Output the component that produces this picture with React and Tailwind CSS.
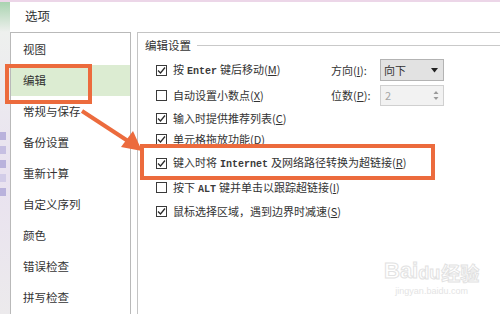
import React from "react";

const U = ({ children }) => <span className="underline underline-offset-1">{children}</span>;
const M = ({ children }) => (
  <span className="font-['Liberation_Mono'] text-[10px] font-bold text-[#3a3a3a] mx-[3px]">{children}</span>
);

function Box({ checked }) {
  return (
    <span className="w-[11px] h-[11px] border border-[#3a3a3a] bg-white flex items-center justify-center shrink-0 mr-[6px]">
      {checked && (
        <svg width="9" height="9" viewBox="0 0 9 9">
          <polyline points="1,4.5 3.5,7 8,1.5" fill="none" stroke="#2a2a2a" strokeWidth="1.3" />
        </svg>
      )}
    </span>
  );
}

function Row({ h, checked, children, extra }) {
  return (
    <div className={`flex items-center ${h}`}>
      <div className="flex items-center w-[175px] whitespace-nowrap">
        <Box checked={checked} />
        <span>{children}</span>
      </div>
      {extra}
    </div>
  );
}

const items = ["视图", "编辑", "常规与保存", "备份设置", "重新计算", "自定义序列", "颜色", "错误检查", "拼写检查"];

export default function App() {
  return (
    <div className="w-[500px] h-[314px] relative overflow-hidden bg-white text-[#333333] font-['Noto_Sans_CJK_SC',sans-serif]">
      <div className="h-[2px] bg-[#ecd6e8]" />
      <div className="flex h-[30px]">
        <div className="w-[10px] bg-gradient-to-b from-[#a9d3b0] to-[#eef0ee]" />
        <div className="flex items-center pl-[15px] text-[12.5px] pb-[2px]">选项</div>
      </div>
      <div className="flex h-[282px]">
        <div className="w-[10px] bg-gradient-to-b from-[#eef0ee] via-[#e9e2f0] to-[#eceaec] flex flex-col gap-[6px] pt-[100px] items-start">
          <div className="w-[6px] h-[8px] bg-[#b9b2dc]" />
          <div className="w-[6px] h-[8px] bg-[#c6bfe2]" />
          <div className="w-[6px] h-[8px] bg-[#b9b2dc]" />
          <div className="w-[6px] h-[8px] bg-[#d2cce8]" />
          <div className="w-[6px] h-[8px] bg-[#b9b2dc]" />
        </div>
        <div className="w-[121px] border border-b-0 border-[#b9b9b9] pt-[1px] text-[11.5px]">
          {items.map((t, i) => (
            <div
              key={t}
              className={`h-[31px] flex items-center pl-[12px] ${i === 1 ? "bg-[#dcecd2]" : ""}`}
            >
              {t}
            </div>
          ))}
        </div>
        <div className="w-[6px]" />
        <div className="flex-1 border-l border-t border-[#c4c4c4] text-[11px] pl-[7px]">
          <div className="h-[24px] flex items-center pt-[1px]">
            <span className="text-[11.5px]">编辑设置</span>
            <div className="flex-1 h-px bg-[#c9c9c9] ml-[6px]" />
          </div>
          <div className="pl-[11px]">
            <Row
              h="h-[26px]"
              checked
              extra={
                <>
                  <span className="w-[49px] whitespace-nowrap">方向(<U>I</U>):</span>
                  <div className="w-[64px] h-[22px] bg-[#e2e2e2] border border-[#b3b3b3] flex items-center justify-between pl-[3px] pr-[5px]">
                    <span>向下</span>
                    <svg width="7" height="5" viewBox="0 0 7 5">
                      <polygon points="0,0 7,0 3.5,4.5" fill="#222" />
                    </svg>
                  </div>
                </>
              }
            >
              按<M>Enter</M>键后移动(<U>M</U>)
            </Row>
            <Row
              h="h-[25px]"
              extra={
                <>
                  <span className="w-[49px] whitespace-nowrap">位数(<U>P</U>):</span>
                  <div className="w-[64px] h-[21px] bg-[#f2f2f2] border border-[#d0d0d0] flex items-center justify-between pl-[4px] pr-[4px] text-[#a5a5a5]">
                    <span>2</span>
                    <svg width="6" height="11" viewBox="0 0 6 11">
                      <polygon points="0.5,4 5.5,4 3,1" fill="#9a9a9a" />
                      <polygon points="0.5,7 5.5,7 3,10" fill="#9a9a9a" />
                    </svg>
                  </div>
                </>
              }
            >
              自动设置小数点(<U>X</U>)
            </Row>
            <Row h="h-[20px]" checked>
              输入时提供推荐列表(<U>C</U>)
            </Row>
            <Row h="h-[22px]" checked>
              单元格拖放功能(<U>D</U>)
            </Row>
            <Row h="h-[26px]" checked>
              键入时将<M>Internet</M>及网络路径转换为超链接(<U>R</U>)
            </Row>
            <Row h="h-[23px]">
              按下<M>ALT</M>键并单击以跟踪超链接(<U>I</U>)
            </Row>
            <Row h="h-[24px]" checked>
              鼠标选择区域，遇到边界时减速(<U>S</U>)
            </Row>
          </div>
        </div>
      </div>

      {/* annotations */}
      <div className="absolute left-[5px] top-[64px] w-[87px] h-[40px] border-[4px] border-[#ec6b3d]" />
      <div className="absolute left-[140px] top-[144px] w-[295px] h-[36px] border-[4px] border-[#ec6b3d]" />
      <svg className="absolute left-0 top-0" width="500" height="314" viewBox="0 0 500 314">
        <line x1="82" y1="111" x2="131" y2="143" stroke="#ec6b3d" strokeWidth="4" />
        <polygon points="142,151 121,147 133,131" fill="#ec6b3d" />
      </svg>

      {/* watermark */}
      <div className="absolute left-[384px] top-[260px] flex flex-col items-center">
        <div className="flex items-end font-['Liberation_Sans'] text-[22px] leading-none font-bold [-webkit-text-stroke:1px_#e2e2e2] text-white">
          <span>Bai</span>
          <span className="text-[18px]">du</span>
          <span className="font-['Noto_Sans_CJK_SC'] text-[19px] ml-[1px]">经验</span>
        </div>
        <div className="text-[9px] font-['Liberation_Sans'] text-[#e4e4e4] mt-[3px]">jingyan.baidu.com</div>
      </div>
    </div>
  );
}
